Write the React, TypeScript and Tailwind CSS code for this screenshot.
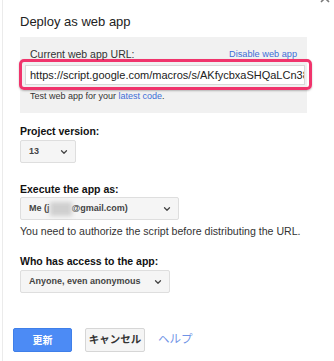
import { ChevronDown } from 'lucide-react';

const font = { fontFamily: '"Liberation Sans", Arial, "Noto Sans CJK JP", sans-serif' };

const Select = ({ width, children }: { width: string; children: React.ReactNode }) => (
    <div className={`${width} h-[23px] flex items-center justify-between pl-[8px] pr-[6px] bg-[#f5f5f5] border border-[#dedede] rounded-[2px] text-[9px] font-bold text-[#444]`}>
        <span className="flex items-center whitespace-nowrap">{children}</span>
        <ChevronDown size={10} strokeWidth={3} className="text-[#444]" />
    </div>
);

export default function App() {
    return (
        <div className="w-[334px] h-[361px] bg-white overflow-hidden relative" style={font}>
            {/* close button, mostly cut off */}
            <svg className="absolute top-[-7px] right-[4px]" width="10" height="10" viewBox="0 0 10 10">
                <path d="M1 1 L9 9 M9 1 L1 9" stroke="#7a7a7a" strokeWidth="1.6" />
            </svg>

            <div className="ml-[2px] h-full border-l border-[#ebebeb] pl-[17px] pt-[14px]">
                <h2 className="text-[13px] leading-4 text-[#222]">Deploy as web app</h2>

                {/* current URL */}
                <div className="mt-[7px] w-[287px] bg-[#f1f1f1] px-[10px] pt-[11px] pb-[11px]">
                    <div className="flex justify-between items-center h-[12px] leading-[12px]">
                        <span className="text-[10.5px] text-[#333]">Current web app URL:</span>
                        <a className="text-[9.2px] text-[#3d6ed6]">Disable web app</a>
                    </div>
                    <div className="mt-[-1px] ml-[-11px] w-[293px] h-[31px] border-[3px] border-[#f0346c] rounded-[5px] pl-[3px] pr-[4px] pt-[3px] shadow-[0_1px_2px_rgba(0,0,0,0.25)]">
                        <div className="h-[20px] bg-white border border-[#d9d9d9] flex items-center pl-[4px] overflow-hidden">
                            <span className="text-[11px] text-[#222] whitespace-nowrap">https://script.google.com/macros/s/AKfycbxaSHQaLCn38</span>
                        </div>
                    </div>
                    <p className="mt-[1px] text-[9px] leading-[11px] text-[#333]">
                        Test web app for your <a className="text-[#3d6ed6]">latest code</a>.
                    </p>
                </div>

                <div className="mt-[12px] text-[10.5px] leading-[12px] font-bold text-[#111]">Project version:</div>
                <div className="mt-[3px]">
                    <Select width="w-[56px]">13</Select>
                </div>

                <div className="mt-[20px] text-[10.5px] leading-[12px] font-bold text-[#111]">Execute the app as:</div>
                <div className="mt-[2px]">
                    <Select width="w-[159px]">
                        Me (j
                        <span className="inline-block w-[22px] h-[14px] bg-[#cfcfcf] blur-[2px]" />
                        @gmail.com)
                    </Select>
                </div>
                <p className="mt-[5px] text-[10.6px] leading-[12px] text-[#333]">
                    You need to authorize the script before distributing the URL.
                </p>

                <div className="mt-[18px] text-[10.5px] leading-[12px] font-bold text-[#111]">Who has access to the app:</div>
                <div className="mt-[3px]">
                    <Select width="w-[150px]">Anyone, even anonymous</Select>
                </div>

                {/* actions */}
                <div className="mt-[35px] ml-[-7px] flex items-center gap-[13px]">
                    <button className="w-[59px] h-[24px] rounded-[2px] bg-[#4c8bf5] border border-[#3f7fe9] text-white text-[10px] font-bold">
                        更新
                    </button>
                    <button className="w-[60px] h-[24px] rounded-[2px] bg-[#f5f5f5] border border-[#d6d6d6] text-[#333] text-[10.5px] font-bold">
                        キャンセル
                    </button>
                    <a className="text-[11.5px] text-[#6f93e6]">ヘルプ</a>
                </div>
            </div>
        </div>
    );
}
